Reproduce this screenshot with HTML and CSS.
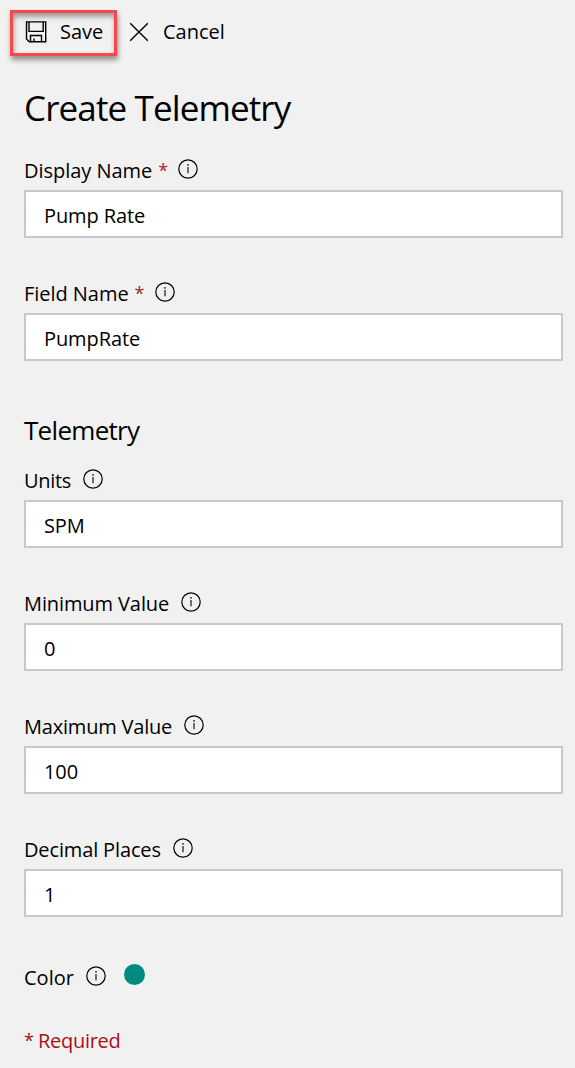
FILE: index.html
```html
<!DOCTYPE html>
<html lang="en">
<head>
<meta charset="utf-8">
<title>Create Telemetry</title>
<link rel="stylesheet" href="styles.css">
</head>
<body>
<svg class="defs" width="0" height="0" aria-hidden="true">
  <symbol id="info" viewBox="0 0 20 20">
    <circle cx="10" cy="10" r="9.2" fill="none" stroke="currentColor" stroke-width="1.2"/>
    <path d="M10 8v6.2" stroke="currentColor" stroke-width="1.1"/>
    <circle cx="10" cy="5.9" r=".8" fill="currentColor"/>
  </symbol>
</svg>
<div class="toolbar">
  <button class="action save">
    <svg width="22" height="22" viewBox="0 0 22 22" fill="none" stroke="currentColor" stroke-width="1.4"><path d="M1.5.9h19.2v19.8H4.2L1.5 18z"/><path d="M4 .9v9.5h14.2V.9M5.5 20.7v-6.2h11v6.2M9 20.7v-3.2"/></svg>
    <span class="t-save">Save</span>
  </button>
  <button class="action cancel">
    <svg width="20" height="20" viewBox="0 0 20 20" fill="none" stroke="currentColor" stroke-width="1.4"><path d="M1.2 1.2l17.6 17.6M18.8 1.2L1.2 18.8"/></svg>
    <span class="t-cancel">Cancel</span>
  </button>
</div>
<main class="form">
  <h1 class="title"><span>Create Telemetry</span></h1>
  <div class="field">
    <label class="label" for="display"><span class="t-display">Display Name</span><span class="star">*</span><svg class="info"><use href="#info"/></svg></label>
    <input class="input t-pump" id="display" value="Pump Rate">
  </div>
  <div class="field">
    <label class="label" for="field"><span class="t-field">Field Name</span><span class="star">*</span><svg class="info"><use href="#info"/></svg></label>
    <input class="input t-pumprate" id="field" value="PumpRate">
  </div>
  <h2 class="section"><span>Telemetry</span></h2>
  <div class="field">
    <label class="label" for="units"><span class="t-units">Units</span><svg class="info"><use href="#info"/></svg></label>
    <input class="input t-spm" id="units" value="SPM">
  </div>
  <div class="field">
    <label class="label" for="min"><span class="t-min">Minimum Value</span><svg class="info"><use href="#info"/></svg></label>
    <input class="input t-num" id="min" value="0">
  </div>
  <div class="field">
    <label class="label" for="max"><span class="t-max">Maximum Value</span><svg class="info"><use href="#info"/></svg></label>
    <input class="input t-num" id="max" value="100">
  </div>
  <div class="field">
    <label class="label" for="decimals"><span class="t-dec">Decimal Places</span><svg class="info"><use href="#info"/></svg></label>
    <input class="input t-num" id="decimals" value="1">
  </div>
  <div class="label color"><span class="t-color">Color</span><svg class="info"><use href="#info"/></svg><i class="swatch"></i></div>
  <p class="required"><span class="ast">*</span><span class="t-req">Required</span></p>
</main>
</body>
</html>
```
FILE: styles.css
```css
* { box-sizing: border-box; }
body {
  margin: 0;
  min-height: 1068px;
  background: #f1f1f1;
  color: #000;
  font: 20px/28px "Open Sans", "Noto Sans", sans-serif;
}
.defs { display: block; height: 0; }
.toolbar { display: flex; height: 57px; padding: 10px 0 0 10px; }
.action {
  display: flex;
  align-items: center;
  height: 46px;
  padding: 0;
  border: 0;
  background: none;
  color: inherit;
  font: inherit;
}
.action svg { flex: none; }
.action span { white-space: nowrap; text-align: left; }
.save {
  width: 107px;
  padding: 0 0 2px 12px;
  gap: 13px;
  border: 3px solid #fb4747;
  box-shadow: 1px 4px 5px rgba(0,0,0,.4), inset 1px 4px 5px rgba(0,0,0,.35);
}
.cancel { margin-left: 12px; gap: 14px; padding-bottom: 2px; }
.form { padding: 24px 12px 0 24px; }
.title, .section { margin: 0; font-weight: 400; white-space: nowrap; }
.title { height: 69px; font-size: 35px; line-height: 54px; letter-spacing: -.88px; }
.section { height: 64px; padding-top: 16px; font-size: 26px; line-height: 36px; letter-spacing: -.7px; }
.field { height: 123px; }
.label { display: flex; height: 40px; align-items: center; white-space: nowrap; }
.label span { flex: none; padding-top: 2px; }
.info { flex: none; width: 20px; height: 20px; margin: 0 0 2px 12px; }
.label .star { margin-left: 6px; padding-top: 0; width: 8px; color: #a4262c; font-size: 18px; }
.t-display, .t-field { letter-spacing: -.04px; }
.t-units { letter-spacing: -.3px; }
.t-min { letter-spacing: -.1px; }
.t-max { letter-spacing: -.2px; }
.t-dec { letter-spacing: -.14px; }
.t-req { letter-spacing: -.3px; }
.input {
  display: block;
  width: 539px;
  height: 48px;
  padding: 3px 17px 0 18px;
  border: 2px solid #c8c8c8;
  border-radius: 0;
  background: #fff;
  color: #000;
  font: inherit;
  letter-spacing: -.1px;
}
.color { height: 40px; margin-top: 5px; }
.swatch { width: 21px; height: 21px; margin: 0 0 5px 18px; border-radius: 50%; background: #018a80; }
.required { display: flex; gap: 5px; margin: 30px 0 0; color: #a80f1a; }
.ast { width: 9px; font-size: 18px; line-height: 26px; }
```
